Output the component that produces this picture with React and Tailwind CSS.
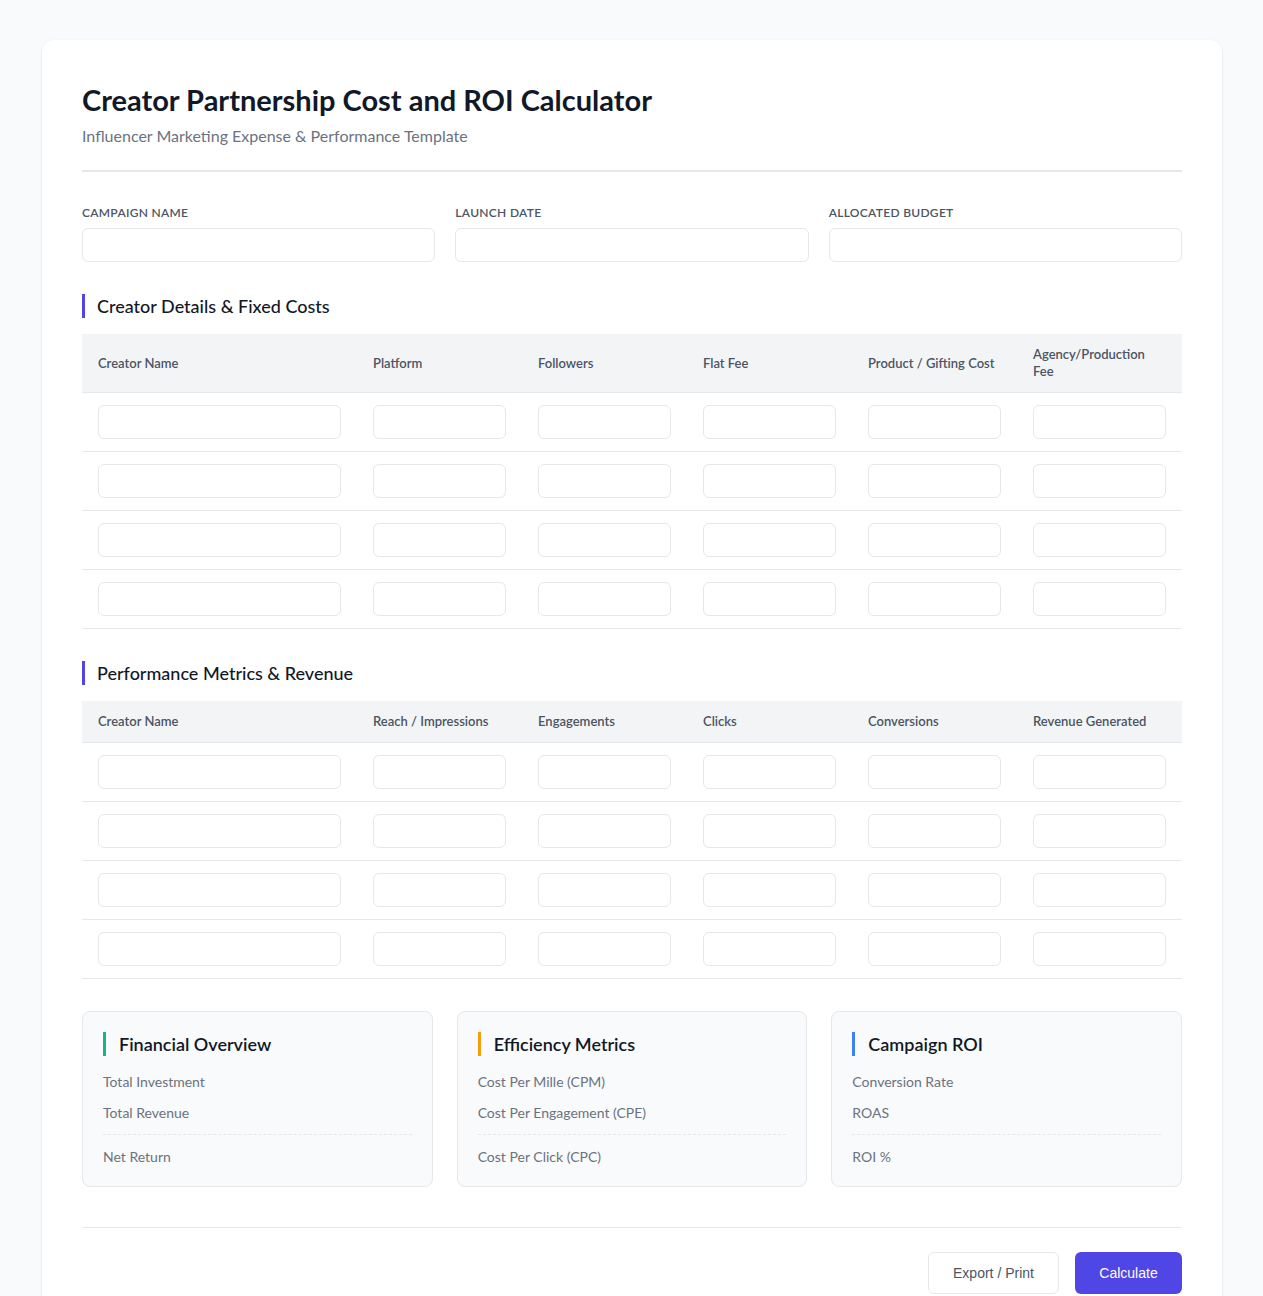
import React from 'react';

const font = { fontFamily: 'Lato, "Noto Sans", sans-serif' };

const costCols = ['Creator Name', 'Platform', 'Followers', 'Flat Fee', 'Product / Gifting Cost', 'Agency/Production Fee'];
const perfCols = ['Creator Name', 'Reach / Impressions', 'Engagements', 'Clicks', 'Conversions', 'Revenue Generated'];

const SectionTitle = ({ children }) => (
  <h2 className="border-l-[3px] border-[#4f46e5] pl-3 text-[18px] leading-6 font-medium text-[#111827]">
    {children}
  </h2>
);

const Field = () => (
  <input type="text" className="w-full h-[34px] rounded-md border border-[#e5e7eb] bg-white px-3 text-sm outline-none" />
);

const DataTable = ({ cols }) => (
  <table className="w-full table-fixed border-collapse text-left">
    <colgroup>
      <col className="w-[275px]" />
      {cols.slice(1).map((c) => (
        <col key={c} className="w-[165px]" />
      ))}
    </colgroup>
    <thead>
      <tr className="bg-[#f3f4f6]">
        {cols.map((c) => (
          <th key={c} className="px-4 py-3 text-[13px] leading-[17px] font-semibold text-[#4b5563] border-b border-[#e5e7eb] align-middle">
            {c}
          </th>
        ))}
      </tr>
    </thead>
    <tbody>
      {[0, 1, 2, 3].map((r) => (
        <tr key={r} className="border-b border-[#e5e7eb]">
          {cols.map((c) => (
            <td key={c} className="px-4 py-3">
              <Field />
            </td>
          ))}
        </tr>
      ))}
    </tbody>
  </table>
);

const SummaryCard = ({ title, bar, items }) => (
  <div className="rounded-lg border border-[#e5e7eb] bg-[#f9fafb] px-5 pt-5 pb-[19px]">
    <h3 className={`border-l-[3px] ${bar} pl-[13px] text-[18px] leading-6 font-semibold text-[#111827]`}>{title}</h3>
    <div className="mt-4 flex flex-col text-sm text-[#6b7280]">
      <div className="leading-5">{items[0]}</div>
      <div className="mt-[11px] leading-5">{items[1]}</div>
      <div className="mt-[11px] border-t border-dashed border-[#e5e7eb]"></div>
      <div className="mt-[12px] leading-5">{items[2]}</div>
    </div>
  </div>
);

export default function App() {
  return (
    <div className="min-h-screen bg-[#f9fafb] pt-10 pl-[42px] pr-[41px]" style={font}>
      <div className="rounded-xl bg-white shadow-sm px-10 pt-[42px] pb-10">
        {/* Header */}
        <div className="border-b-2 border-[#e5e7eb] pb-[22px]">
          <h1 className="text-[29px] leading-9 font-bold text-[#111827]">Creator Partnership Cost and ROI Calculator</h1>
          <p className="mt-[6px] text-base leading-6 text-[#6b7280]">Influencer Marketing Expense &amp; Performance Template</p>
        </div>

        {/* Campaign fields */}
        <div className="mt-[33px] grid grid-cols-3 gap-5">
          {['Campaign Name', 'Launch Date', 'Allocated Budget'].map((l) => (
            <div key={l}>
              <label className="block text-xs leading-4 font-semibold uppercase tracking-wide text-[#4b5563]">{l}</label>
              <div className="mt-[7px]">
                <Field />
              </div>
            </div>
          ))}
        </div>

        <div className="mt-8">
          <SectionTitle>Creator Details &amp; Fixed Costs</SectionTitle>
          <div className="mt-4">
            <DataTable cols={costCols} />
          </div>
        </div>

        <div className="mt-8">
          <SectionTitle>Performance Metrics &amp; Revenue</SectionTitle>
          <div className="mt-4">
            <DataTable cols={perfCols} />
          </div>
        </div>

        <div className="mt-8 grid grid-cols-3 gap-6">
          <SummaryCard title="Financial Overview" bar="border-[#10b981]" items={['Total Investment', 'Total Revenue', 'Net Return']} />
          <SummaryCard title="Efficiency Metrics" bar="border-[#f59e0b]" items={['Cost Per Mille (CPM)', 'Cost Per Engagement (CPE)', 'Cost Per Click (CPC)']} />
          <SummaryCard title="Campaign ROI" bar="border-[#3b82f6]" items={['Conversion Rate', 'ROAS', 'ROI %']} />
        </div>

        <div className="mt-10 border-t border-[#e5e7eb] pt-6 flex justify-end gap-4" style={{ fontFamily: '"Liberation Sans", Arial, sans-serif' }}>
          <button className="h-[42px] w-[131px] rounded-md border border-[#e5e7eb] bg-white text-sm text-[#4b5563]">Export / Print</button>
          <button className="h-[42px] w-[107px] rounded-md bg-[#4f46e5] text-sm text-white">Calculate</button>
        </div>
      </div>
    </div>
  );
}
